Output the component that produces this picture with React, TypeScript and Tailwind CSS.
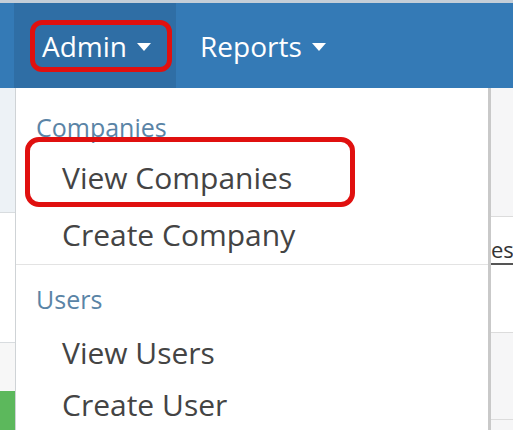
import React from "react";

function Caret() {
  return (
    <svg width="14" height="8" viewBox="0 0 14 8" className="ml-[10px] mt-[2px]">
      <path d="M0 0 L14 0 L7 8 Z" fill="white" />
    </svg>
  );
}

function MenuItem({ label, className }: { label: string; className: string }) {
  return (
    <div className={`flex items-center pl-[46px] text-[30px] text-[#444] ${className}`}>
      {label}
    </div>
  );
}

function MenuHeader({ label, className }: { label: string; className: string }) {
  return (
    <div className={`flex items-center pl-[20px] text-[25px] text-[#5a84a6] ${className}`}>
      {label}
    </div>
  );
}

export default function App() {
  return (
    <div
      className="w-[513px] h-[430px] overflow-hidden bg-[#f4f5f6] flex flex-col"
      style={{ fontFamily: '"Open Sans", "Noto Sans", sans-serif' }}
    >
      <div className="h-[3px] bg-[#c4ced8]" />
      <nav className="h-[85px] bg-[#347ab6] flex items-stretch pl-[14px] text-white">
        <div className="w-[162px] bg-[#2f6ea5] flex items-center pl-[16px]">
          <div className="h-[52px] w-[142px] border-[5px] border-[#e0100f] rounded-[12px] flex items-center pl-[7px] text-[28px] leading-none">
            Admin
            <Caret />
          </div>
        </div>
        <div className="flex items-center pl-[24px] text-[28px] leading-none">
          Reports
          <Caret />
        </div>
      </nav>

      <div className="flex flex-1 min-h-0">
        <div className="w-[16px] border-r border-[#cfd3d6] flex flex-col">
          <div className="h-[125px] bg-[#edf2f6] border-b border-[#d8dcdf]" />
          <div className="h-[130px] bg-white border-b border-[#d8dcdf]" />
          <div className="h-[48px] bg-[#f7f7f7]" />
          <div className="flex-1 bg-[#5cb85c]" />
        </div>

        <div className="w-[472px] bg-white relative flex flex-col">
          <MenuHeader label="Companies" className="mt-[18px] h-[44px]" />
          <MenuItem label="View Companies" className="h-[60px]" />
          <MenuItem label="Create Company" className="h-[56px]" />
          <div className="mt-[2px] h-px bg-[#e3e3e3]" />
          <MenuHeader label="Users" className="h-[64px] pt-[8px]" />
          <MenuItem label="View Users" className="h-[53px]" />
          <MenuItem label="Create User" className="h-[53px]" />
          <div className="absolute left-[9px] top-[49px] w-[330px] h-[70px] border-[5px] border-[#e0100f] rounded-[14px]" />
        </div>

        <div className="flex-1 border-l-[3px] border-[#c9c9c9] flex flex-col bg-[#f6f6f7] overflow-hidden">
          <div className="h-[129px] border-b border-[#dcdcdc]" />
          <div className="h-[116px] border-b border-[#dcdcdc] bg-white flex flex-col overflow-hidden">
            <span className="mt-[18px] text-[22px] leading-[28px] text-[#333] whitespace-nowrap border-b-2 border-[#555] self-start">
              es
            </span>
          </div>
          <div className="h-[87px] border-b border-[#dcdcdc]" />
          <div className="flex-1" />
        </div>
      </div>
    </div>
  );
}
